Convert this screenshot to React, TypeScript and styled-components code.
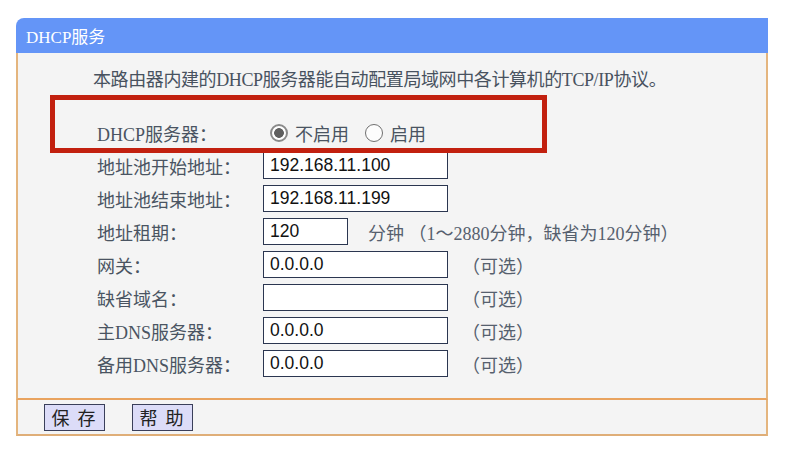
import React from 'react'
import styled, { createGlobalStyle } from 'styled-components'

const GlobalStyle = createGlobalStyle`
  html, body {
    margin: 0;
    padding: 0;
    background: #ffffff;
  }
  body {
    font-family: 'Liberation Serif', 'Noto Sans CJK SC', serif;
  }
`

const Page = styled.div`
  width: 792px;
  height: 459px;
  padding: 18px 0 0 16px;
  box-sizing: border-box;
`

const Panel = styled.div`
  width: 752px;
`

const Header = styled.div`
  height: 35px;
  background: #6495f7;
  border-top-left-radius: 8px;
  padding-left: 10px;
  display: flex;
  align-items: center;
  color: #ffffff;
  font: normal 17px 'Liberation Serif', 'Noto Sans CJK SC', serif;
`

const Body = styled.div`
  position: relative;
  background: #f4f4f4;
  border-left: 2px solid #e4b57e;
  border-right: 2px solid #e4b57e;
  border-bottom: 2px solid #e9a35f;
  padding: 15px 0 18px 75px;
`

const Intro = styled.div`
  height: 24px;
  line-height: 24px;
  font-size: 18px;
  color: #48525f;
  margin-bottom: 24px;
  letter-spacing: -0.4px;
`

const Form = styled.div`
  display: grid;
  grid-template-columns: 166px 1fr;
  grid-auto-rows: 33px;
  padding-left: 4px;
`

const Label = styled.div`
  display: flex;
  align-items: center;
  font-size: 18px;
  color: #4a5462;
  white-space: nowrap;
`

const Field = styled.div`
  display: flex;
  align-items: center;
`

const TextBox = styled.input<{ $w?: number }>`
  width: ${p => p.$w ?? 185}px;
  height: 27px;
  box-sizing: border-box;
  border: 1px solid #2b3650;
  background: #ffffff;
  padding: 0 6px;
  font: normal 17.5px 'Liberation Sans', Arial, sans-serif;
  color: #111111;
  &:focus {
    outline: none;
  }
`

const Note = styled.span<{ $gap?: number }>`
  margin-left: ${p => p.$gap ?? 14}px;
  font-size: 18px;
  color: #56606e;
  white-space: nowrap;
`

const RadioDot = styled.span<{ $on?: boolean }>`
  width: 18px;
  height: 18px;
  box-sizing: border-box;
  border-radius: 50%;
  border: ${p => (p.$on ? '2px solid #8a8a8a' : '1.5px solid #707070')};
  background: ${p => (p.$on ? 'radial-gradient(circle, #5f5f5f 0 4.5px, #ffffff 5.2px)' : '#fdfdfd')};
  margin: 0 7px 0 0;
`

const RadioItem = styled.label<{ $first?: boolean }>`
  display: flex;
  align-items: center;
  margin-left: ${p => (p.$first ? 7 : 16)}px;
  font-size: 18px;
  color: #4a5462;
`

const Highlight = styled.div`
  position: absolute;
  left: 32px;
  top: 42px;
  width: 497px;
  height: 58px;
  box-sizing: border-box;
  border: 5px solid #c2200f;
  pointer-events: none;
`

const Footer = styled.div`
  height: 36px;
  box-sizing: border-box;
  background: #f4f4f4;
  border-left: 2px solid #e4b57e;
  border-right: 2px solid #e4b57e;
  border-bottom: 2px solid #dfae78;
  padding: 4px 0 0 26px;
  display: flex;
  gap: 27px;
  align-items: flex-start;
`

const Button = styled.button`
  width: 61px;
  height: 27px;
  box-sizing: border-box;
  border: 1px solid #3a3f5a;
  background: #dcdcf8;
  padding: 0;
  font: normal 18px 'Noto Sans CJK SC', sans-serif;
  color: #222222;
  line-height: 25px;
  letter-spacing: 2px;
`

const rows: { label: string; value: string; note?: string; width?: number }[] = [
  { label: '地址池开始地址：', value: '192.168.11.100' },
  { label: '地址池结束地址：', value: '192.168.11.199' },
  { label: '地址租期：', value: '120', width: 85 },
  { label: '网关：', value: '0.0.0.0', note: '（可选）' },
  { label: '缺省域名：', value: '', note: '（可选）' },
  { label: '主DNS服务器：', value: '0.0.0.0', note: '（可选）' },
  { label: '备用DNS服务器：', value: '0.0.0.0', note: '（可选）' },
]

export default function App() {
  const [enabled, setEnabled] = React.useState(false)
  return (
    <Page>
      <GlobalStyle />
      <Panel>
        <Header>DHCP服务</Header>
        <Body>
          <Intro>本路由器内建的DHCP服务器能自动配置局域网中各计算机的TCP/IP协议。</Intro>
          <Form>
            <Label>DHCP服务器：</Label>
            <Field>
              <RadioItem $first onClick={() => setEnabled(false)}>
                <RadioDot $on={!enabled} />
                不启用
              </RadioItem>
              <RadioItem onClick={() => setEnabled(true)}>
                <RadioDot $on={enabled} />
                启用
              </RadioItem>
            </Field>
            {rows.map(r => (
              <React.Fragment key={r.label}>
                <Label>{r.label}</Label>
                <Field>
                  <TextBox $w={r.width} defaultValue={r.value} />
                  {r.width ? (
                    <Note $gap={20}>分钟 （1～2880分钟，缺省为120分钟）</Note>
                  ) : (
                    r.note && <Note>{r.note}</Note>
                  )}
                </Field>
              </React.Fragment>
            ))}
          </Form>
          <Highlight />
        </Body>
        <Footer>
          <Button>保 存</Button>
          <Button>帮 助</Button>
        </Footer>
      </Panel>
    </Page>
  )
}
